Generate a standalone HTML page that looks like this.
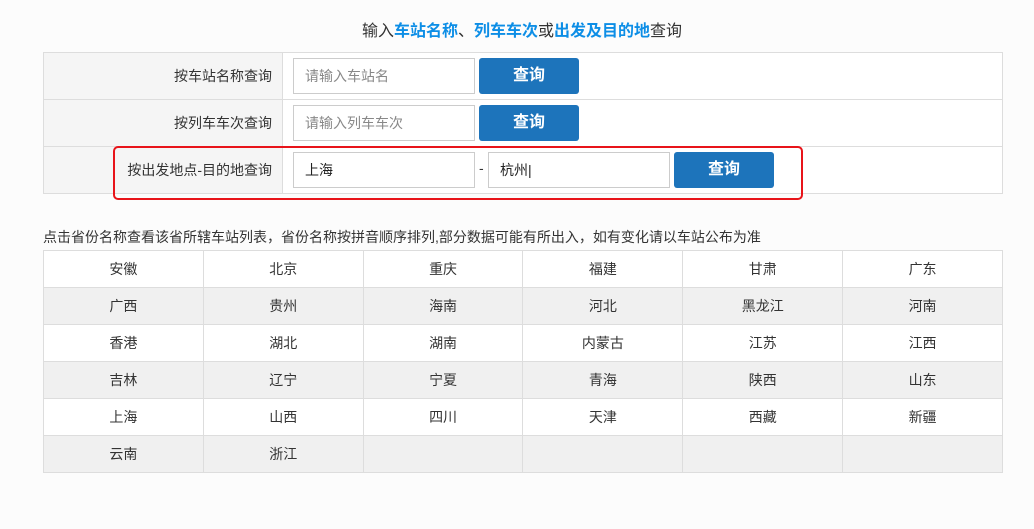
<!DOCTYPE html>
<html><head><meta charset="utf-8"><style>
body{margin:0;background:#fcfcfc;font-family:"Liberation Sans","Noto Sans CJK SC",sans-serif;color:#333;width:1034px;height:529px;overflow:hidden;position:relative}
.t{position:absolute;top:21px;left:0;width:1044px;text-align:center;font-size:16px;line-height:22px;color:#333}
.t b{color:#0d8ee6;font-weight:bold}
table{border-collapse:collapse;position:absolute;left:43px;width:960px}
td{border:1px solid #ddd;padding:0}
#q td{height:46px}
#q td.l{width:228px;background:#f5f5f5;text-align:right;padding-right:10px;font-size:14px}
#q td.r{background:#fff;position:relative}
.in{position:absolute;top:5px;height:36px;width:182px;border:1px solid #ccc;background:#fff;font-size:14px;line-height:34px;padding-left:11px;box-sizing:border-box;color:#222}
.ph{color:#888}
.btn{position:absolute;top:5px;width:100px;height:36px;background:#1d74bb;color:#fff;border-radius:3px;font-size:16px;font-weight:bold;text-align:center;line-height:36px}
#p{top:250px}
#p td{height:36px;text-align:center;font-size:14px;width:159px;background:#fff}
#p tr:nth-child(even) td{background:#f0f0f0}
.note{position:absolute;top:228px;left:43px;font-size:14px;line-height:18px}
.red{position:absolute;left:113px;top:146px;width:686px;height:50px;border:2px solid #e8141a;border-radius:5px}
</style></head><body>
<div class="t">输入<b>车站名称</b>、<b>列车车次</b>或<b>出发及目的地</b>查询</div>
<table id="q" style="top:52px">
<tr><td class="l">按车站名称查询</td><td class="r"><div class="in ph" style="left:10px">请输入车站名</div><div class="btn" style="left:196px">查询</div></td></tr>
<tr><td class="l">按列车车次查询</td><td class="r"><div class="in ph" style="left:10px">请输入列车车次</div><div class="btn" style="left:196px">查询</div></td></tr>
<tr><td class="l">按出发地点-目的地查询</td><td class="r"><div class="in" style="left:10px">上海</div><span style="position:absolute;left:196px;top:13px;font-size:14px">-</span><div class="in" style="left:205px">杭州|</div><div class="btn" style="left:391px">查询</div></td></tr>
</table>
<div class="red"></div>
<div class="note">点击省份名称查看该省所辖车站列表，省份名称按拼音顺序排列,部分数据可能有所出入，如有变化请以车站公布为准</div>
<table id="p">
<tr><td>安徽</td><td>北京</td><td>重庆</td><td>福建</td><td>甘肃</td><td>广东</td></tr>
<tr><td>广西</td><td>贵州</td><td>海南</td><td>河北</td><td>黑龙江</td><td>河南</td></tr>
<tr><td>香港</td><td>湖北</td><td>湖南</td><td>内蒙古</td><td>江苏</td><td>江西</td></tr>
<tr><td>吉林</td><td>辽宁</td><td>宁夏</td><td>青海</td><td>陕西</td><td>山东</td></tr>
<tr><td>上海</td><td>山西</td><td>四川</td><td>天津</td><td>西藏</td><td>新疆</td></tr>
<tr><td>云南</td><td>浙江</td><td></td><td></td><td></td><td></td></tr>
</table>
</body></html>
